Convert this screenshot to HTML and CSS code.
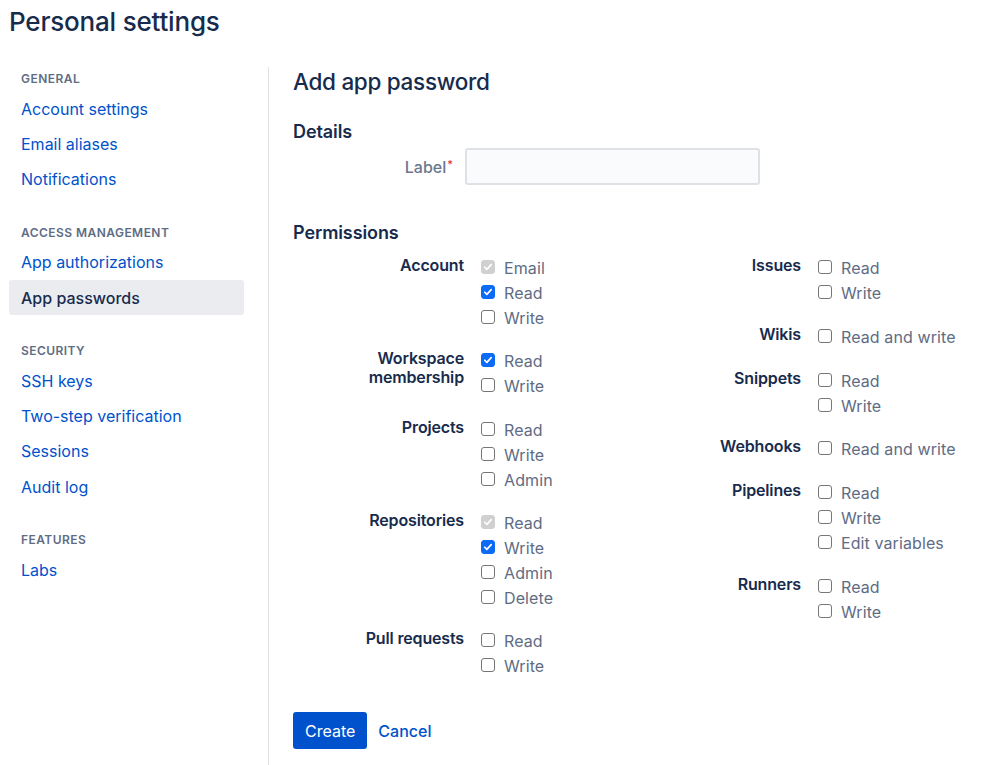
FILE: index.html
```html
<!DOCTYPE html>
<html>
<head>
<meta charset="utf-8">
<link rel="stylesheet" href="styles.css">
</head>
<body>
<h1 class="page-title">Personal settings</h1>
<div class="layout">
  <nav class="sidebar">
    <div class="nav-section">
      <div class="nav-heading">General</div>
      <a class="nav-item">Account settings</a>
      <a class="nav-item">Email aliases</a>
      <a class="nav-item">Notifications</a>
    </div>
    <div class="nav-section">
      <div class="nav-heading">Access management</div>
      <a class="nav-item">App authorizations</a>
      <a class="nav-item selected">App passwords</a>
    </div>
    <div class="nav-section">
      <div class="nav-heading">Security</div>
      <a class="nav-item">SSH keys</a>
      <a class="nav-item">Two-step verification</a>
      <a class="nav-item">Sessions</a>
      <a class="nav-item">Audit log</a>
    </div>
    <div class="nav-section">
      <div class="nav-heading">Features</div>
      <a class="nav-item">Labs</a>
    </div>
  </nav>
  <main class="content">
    <h2 class="content-title">Add app password</h2>
    <h3 class="section-title">Details</h3>
    <div class="field-row">
      <label class="field-label">Label<span class="req">*</span></label>
      <input class="text-input" type="text">
    </div>
    <h3 class="section-title perm-title">Permissions</h3>
    <div class="perm-grid">
      <div class="perm-col">
        <div class="group">
          <div class="group-label">Account</div>
          <div class="options">
            <div class="opt"><span class="cb disabled"><svg viewBox="0 0 14 14"><path d="M3.2 7.3l2.5 2.5 5-5.6" /></svg></span>Email</div>
            <div class="opt"><span class="cb checked"><svg viewBox="0 0 14 14"><path d="M3.2 7.3l2.5 2.5 5-5.6" /></svg></span>Read</div>
            <div class="opt"><span class="cb"></span>Write</div>
          </div>
        </div>
        <div class="group">
          <div class="group-label">Workspace<br>membership</div>
          <div class="options">
            <div class="opt"><span class="cb checked"><svg viewBox="0 0 14 14"><path d="M3.2 7.3l2.5 2.5 5-5.6" /></svg></span>Read</div>
            <div class="opt"><span class="cb"></span>Write</div>
          </div>
        </div>
        <div class="group">
          <div class="group-label">Projects</div>
          <div class="options">
            <div class="opt"><span class="cb"></span>Read</div>
            <div class="opt"><span class="cb"></span>Write</div>
            <div class="opt"><span class="cb"></span>Admin</div>
          </div>
        </div>
        <div class="group">
          <div class="group-label">Repositories</div>
          <div class="options">
            <div class="opt"><span class="cb disabled"><svg viewBox="0 0 14 14"><path d="M3.2 7.3l2.5 2.5 5-5.6" /></svg></span>Read</div>
            <div class="opt"><span class="cb checked"><svg viewBox="0 0 14 14"><path d="M3.2 7.3l2.5 2.5 5-5.6" /></svg></span>Write</div>
            <div class="opt"><span class="cb"></span>Admin</div>
            <div class="opt"><span class="cb"></span>Delete</div>
          </div>
        </div>
        <div class="group">
          <div class="group-label">Pull requests</div>
          <div class="options">
            <div class="opt"><span class="cb"></span>Read</div>
            <div class="opt"><span class="cb"></span>Write</div>
          </div>
        </div>
      </div>
      <div class="perm-col col-right">
        <div class="group">
          <div class="group-label">Issues</div>
          <div class="options">
            <div class="opt"><span class="cb"></span>Read</div>
            <div class="opt"><span class="cb"></span>Write</div>
          </div>
        </div>
        <div class="group">
          <div class="group-label">Wikis</div>
          <div class="options">
            <div class="opt"><span class="cb"></span>Read and write</div>
          </div>
        </div>
        <div class="group">
          <div class="group-label">Snippets</div>
          <div class="options">
            <div class="opt"><span class="cb"></span>Read</div>
            <div class="opt"><span class="cb"></span>Write</div>
          </div>
        </div>
        <div class="group">
          <div class="group-label">Webhooks</div>
          <div class="options">
            <div class="opt"><span class="cb"></span>Read and write</div>
          </div>
        </div>
        <div class="group">
          <div class="group-label">Pipelines</div>
          <div class="options">
            <div class="opt"><span class="cb"></span>Read</div>
            <div class="opt"><span class="cb"></span>Write</div>
            <div class="opt"><span class="cb"></span>Edit variables</div>
          </div>
        </div>
        <div class="group">
          <div class="group-label">Runners</div>
          <div class="options">
            <div class="opt"><span class="cb"></span>Read</div>
            <div class="opt"><span class="cb"></span>Write</div>
          </div>
        </div>
      </div>
    </div>
    <div class="actions">
      <button class="btn-primary">Create</button>
      <a class="btn-link">Cancel</a>
    </div>
  </main>
</div>
</body>
</html>
```
FILE: styles.css
```css
* { box-sizing: border-box; }
html, body { margin: 0; padding: 0; background: #fff; }
body {
  font-family: Inter, "Noto Sans", "Liberation Sans", sans-serif;
  color: #172B4D;
  font-size: 16px;
  overflow: hidden;
}
.page-title {
  margin: 0;
  padding: 5px 0 0 9px;
  font-size: 26px;
  font-weight: 500;
  line-height: 34px;
  letter-spacing: -0.2px;
  height: 67px;
}
.layout {
  display: flex;
  align-items: stretch;
  min-height: 698px;
}
.sidebar {
  width: 269px;
  padding: 0 24px 0 9px;
  border-right: 1px solid #DFE1E6;
}
.nav-section { margin-bottom: 24px; }
.nav-heading {
  font-size: 12px;
  font-weight: 600;
  text-transform: uppercase;
  color: #5E6C84;
  letter-spacing: 0.45px;
  padding: 4px 12px 0;
  height: 24px;
  line-height: 16px;
}
.nav-item {
  display: block;
  color: #0052CC;
  font-size: 16px;
  line-height: 20px;
  padding: 7.5px 12px;
  border-radius: 3px;
  text-decoration: none;
  height: 35.25px;
}
.nav-item.selected {
  background: #EBECF0;
  color: #172B4D;
  font-weight: 500;
}
.content {
  padding: 0 0 0 24px;
  flex: 1;
}
.content-title {
  margin: 0;
  font-size: 22.5px;
  font-weight: 500;
  line-height: 30px;
  letter-spacing: -0.3px;
}
.section-title {
  margin: 23px 0 0;
  font-size: 18px;
  font-weight: 600;
  line-height: 24px;
  letter-spacing: -0.1px;
}
.perm-title { margin-top: 36px; }
.field-row {
  display: grid;
  grid-template-columns: 160px 295px;
  column-gap: 12px;
  align-items: center;
  margin-top: 4px;
}
.field-label {
  text-align: right;
  color: #6B778C;
  font-weight: 500;
  font-size: 16px;
}
.req { color: #DE350B; font-size: 11px; vertical-align: top; margin-left: 1px; }
.text-input {
  height: 37px;
  width: 295px;
  background: #FAFBFC;
  border: 2px solid #DFE1E6;
  border-radius: 3px;
  outline: none;
}
.perm-grid {
  display: grid;
  grid-template-columns: 337px 337px;
  margin-top: 10px;
}
.perm-col { display: flex; flex-direction: column; gap: 18.25px; }
.col-right { gap: 18.8px; }
.group {
  display: grid;
  grid-template-columns: 171px auto;
  column-gap: 17px;
}
.group-label {
  text-align: right;
  font-weight: 600;
  font-size: 16px;
  line-height: 19px;
  letter-spacing: -0.15px;
  padding-top: 1px;
}
.options { display: flex; flex-direction: column; }
.opt {
  display: flex;
  align-items: center;
  height: 25px;
  color: #5E6C84;
  font-size: 16px;
  letter-spacing: 0.1px;
  white-space: nowrap;
  padding-top: 1px;
}
.cb {
  width: 14px;
  height: 14px;
  border: 1px solid #767676;
  border-radius: 3px;
  background: #fff;
  margin-right: 9px;
  display: inline-flex;
  align-items: center;
  justify-content: center;
  flex: none;
  margin-top: -2px;
}
.cb svg { width: 14px; height: 14px; }
.cb svg path { fill: none; stroke: #fff; stroke-width: 2; stroke-linecap: round; stroke-linejoin: round; }
.cb.checked { background: #0B6BF5; border-color: #0B6BF5; }
.cb.disabled { background: #D0D0D0; border-color: #D0D0D0; }
.actions {
  display: flex;
  align-items: center;
  gap: 11px;
  margin-top: 34px;
}
.btn-primary {
  background: #0052CC;
  color: #fff;
  border: none;
  border-radius: 3px;
  height: 37px;
  padding: 0 12px;
  font-family: inherit;
  font-size: 16px;
  font-weight: 400;
}
.btn-link {
  color: #0052CC;
  font-size: 16px;
  font-weight: 500;
  text-decoration: none;
}
```
